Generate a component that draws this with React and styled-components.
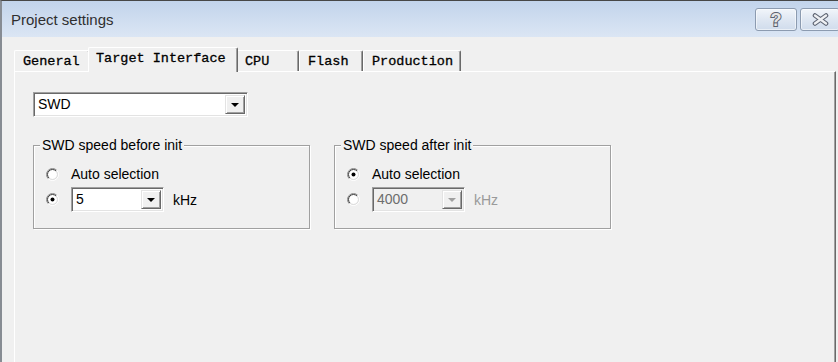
import React from "react";
import styled, { createGlobalStyle } from "styled-components";

const GlobalStyle = createGlobalStyle`
  html, body {
    margin: 0;
    padding: 0;
    background: #f0f0f0;
    overflow: hidden;
  }
`;

const Window = styled.div`
  width: 838px;
  height: 362px;
  box-sizing: border-box;
  display: flex;
  flex-direction: column;
  border-top: 1px solid #474747;
  border-left: 2px solid #878c93;
  background: #f0f0f0;
  overflow: hidden;
  font-family: "Liberation Sans", Arial, sans-serif;
`;

const TitleBar = styled.div`
  height: 36px;
  flex: none;
  display: flex;
  align-items: center;
  padding: 1px 0 0 9px;
  box-sizing: border-box;
  background: linear-gradient(#c2d4eb, #dbe6f4);
`;

const Title = styled.div`
  font-size: 15px;
  color: #2f2f2f;
`;

const CaptionButtons = styled.div`
  margin-left: auto;
  margin-right: -2px;
  display: flex;
  gap: 3px;
`;

const CaptionButton = styled.div`
  width: ${(p) => p.$w}px;
  height: 23px;
  box-sizing: border-box;
  border: 1px solid #8c9bb0;
  border-radius: 3px;
  background: linear-gradient(#f1f5fa, #dfe7f2 50%, #d0dcec);
  box-shadow: inset 0 0 0 1px rgba(255, 255, 255, 0.55);
  display: flex;
  align-items: center;
  justify-content: center;
`;

const HelpGlyph = styled.span`
  font-family: "Liberation Sans", Arial, sans-serif;
  font-weight: bold;
  font-size: 18px;
  line-height: 18px;
  color: #e6e6e6;
  -webkit-text-stroke: 2px #5b6270;
  paint-order: stroke fill;
`;

const Body = styled.div`
  flex: 1;
  display: flex;
  flex-direction: column;
  padding: 10px 2px 0 12px;
`;

const TabStrip = styled.div`
  display: flex;
  align-items: flex-end;
  height: 24px;
  flex: none;
`;

const Tab = styled.div`
  position: relative;
  width: ${(p) => p.$w}px;
  height: ${(p) => (p.$active ? 25 : 21)}px;
  margin: ${(p) => (p.$active ? "0 -2px -1px -2px" : "0")};
  z-index: ${(p) => (p.$active ? 1 : 0)};
  box-sizing: border-box;
  padding: ${(p) => (p.$active ? "3px 0 0 7px" : "3px 0 0 8px")};
  background: #f0f0f0;
  border-top: 1px solid #fff;
  border-left: 1px solid #fff;
  border-right: 1px solid #696969;
  border-radius: 2px 2px 0 0;
  box-shadow: inset -1px 0 0 #a0a0a0;
  font-family: "Liberation Mono", "Courier New", monospace;
  font-size: 13.5px;
  line-height: 16px;
  color: #000;
  white-space: pre;
  -webkit-text-stroke: 0.3px #000;
`;

const Panel = styled.div`
  flex: none;
  height: 320px;
  box-sizing: border-box;
  border-top: 1px solid #fff;
  border-left: 1px solid #fff;
  border-right: 1px solid #696969;
  box-shadow: inset -1px 0 0 #a0a0a0;
  padding: 20px 0 0 18px;
`;

const Combo = styled.div`
  width: ${(p) => p.$w}px;
  height: 25px;
  box-sizing: border-box;
  display: flex;
  padding: 2px;
  border-top: 1px solid #a0a0a0;
  border-left: 1px solid #a0a0a0;
  border-bottom: 1px solid #fff;
  border-right: 1px solid #fff;
  box-shadow: inset 1px 1px 0 #696969, inset -1px -1px 0 #e3e3e3;
  background: ${(p) => (p.$disabled ? "#f0f0f0" : "#fff")};
`;

const ComboText = styled.span`
  flex: 1;
  padding-left: 2px;
  font-size: 14px;
  line-height: 19px;
  color: ${(p) => (p.$disabled ? "#6d6d6d" : "#000")};
`;

const DropButton = styled.span`
  width: 20px;
  box-sizing: border-box;
  display: flex;
  align-items: center;
  justify-content: center;
  background: #f0f0f0;
  border-top: 1px solid #e3e3e3;
  border-left: 1px solid #e3e3e3;
  border-right: 1px solid #696969;
  border-bottom: 1px solid #696969;
  box-shadow: inset 1px 1px 0 #fff, inset -1px -1px 0 #a0a0a0;
`;

const GroupRow = styled.div`
  display: flex;
  gap: 24px;
  margin-top: 20px;
`;

const Group = styled.fieldset`
  margin: 0;
  width: 277px;
  box-sizing: border-box;
  padding: 11px 8px 16px 6px;
  border: 1px solid #a0a0a0;
  box-shadow: inset 1px 1px 0 #fff, 1px 1px 0 #fff;
`;

const Legend = styled.legend`
  padding: 0 2px;
  font-size: 14px;
  line-height: 16px;
  color: #000;
  background: #f0f0f0;
`;

const OptionRow = styled.div`
  display: flex;
  align-items: center;
  gap: 12px;
  padding-left: 6px;
  height: ${(p) => p.$h}px;
  margin-top: ${(p) => p.$mt || 0}px;
`;

const Label = styled.span`
  font-size: 14px;
  line-height: 16px;
  color: ${(p) => (p.$disabled ? "#9a9a9a" : "#000")};
`;

const Unit = styled(Label)`
  margin-left: -3px;
`;

const RadioSvg = styled.svg`
  width: 13px;
  height: 13px;
  flex: none;
`;

function arc(r, c) {
  const d = r * Math.SQRT1_2;
  return [
    `M ${c - d} ${c + d} A ${r} ${r} 0 0 1 ${c + d} ${c - d}`,
    `M ${c + d} ${c - d} A ${r} ${r} 0 0 1 ${c - d} ${c + d}`,
  ];
}

function Radio({ checked, disabled }) {
  const [o1, o2] = arc(6, 6.5);
  const [i1, i2] = arc(5, 6.5);
  return (
    <RadioSvg viewBox="0 0 13 13">
      <circle cx="6.5" cy="6.5" r="4.5" fill={disabled ? "#f0f0f0" : "#fff"} />
      <path d={o1} stroke="#8a8a8a" fill="none" />
      <path d={o2} stroke="#fff" fill="none" />
      <path d={i1} stroke="#404040" fill="none" />
      <path d={i2} stroke="#dcdcdc" fill="none" />
      {checked && <circle cx="6.5" cy="6.5" r="2" fill={disabled ? "#a0a0a0" : "#000"} />}
    </RadioSvg>
  );
}

function Arrow({ disabled }) {
  return (
    <svg width="8" height="4" viewBox="0 0 8 4">
      <polygon points="0,0 8,0 4,4" fill={disabled ? "#a0a0a0" : "#000"} />
    </svg>
  );
}

function DropDown({ width, value, disabled }) {
  return (
    <Combo $w={width} $disabled={disabled}>
      <ComboText $disabled={disabled}>{value}</ComboText>
      <DropButton>
        <Arrow disabled={disabled} />
      </DropButton>
    </Combo>
  );
}

function CloseIcon() {
  return (
    <svg width="17" height="13" viewBox="0 0 17 13">
      <path d="M3 2.5 L14 10.5 M14 2.5 L3 10.5" stroke="#5b6270" strokeWidth="4.6" strokeLinecap="round" />
      <path d="M3 2.5 L14 10.5 M14 2.5 L3 10.5" stroke="#eef0f3" strokeWidth="2.4" strokeLinecap="round" />
    </svg>
  );
}

function SpeedGroup({ title, autoSelected, value, disabled }) {
  return (
    <Group>
      <Legend>{title}</Legend>
      <OptionRow $h={20}>
        <Radio checked={autoSelected} />
        <Label>Auto selection</Label>
      </OptionRow>
      <OptionRow $h={25} $mt={3}>
        <Radio checked={!autoSelected} />
        <DropDown width={93} value={value} disabled={disabled} />
        <Unit $disabled={disabled}>kHz</Unit>
      </OptionRow>
    </Group>
  );
}

const tabs = [
  { label: "General", w: 76 },
  { label: "Target Interface", w: 150, active: true },
  { label: "CPU", w: 63 },
  { label: "Flash", w: 64 },
  { label: "Production", w: 98 },
];

export default function App() {
  return (
    <>
      <GlobalStyle />
      <Window>
        <TitleBar>
          <Title>Project settings</Title>
          <CaptionButtons>
            <CaptionButton $w={42}>
              <HelpGlyph>?</HelpGlyph>
            </CaptionButton>
            <CaptionButton $w={40}>
              <CloseIcon />
            </CaptionButton>
          </CaptionButtons>
        </TitleBar>
        <Body>
          <TabStrip>
            {tabs.map((t) => (
              <Tab key={t.label} $w={t.w} $active={t.active}>
                {t.label}
              </Tab>
            ))}
          </TabStrip>
          <Panel>
            <DropDown width={215} value="SWD" />
            <GroupRow>
              <SpeedGroup title="SWD speed before init" autoSelected={false} value="5" />
              <SpeedGroup title="SWD speed after init" autoSelected value="4000" disabled />
            </GroupRow>
          </Panel>
        </Body>
      </Window>
    </>
  );
}
